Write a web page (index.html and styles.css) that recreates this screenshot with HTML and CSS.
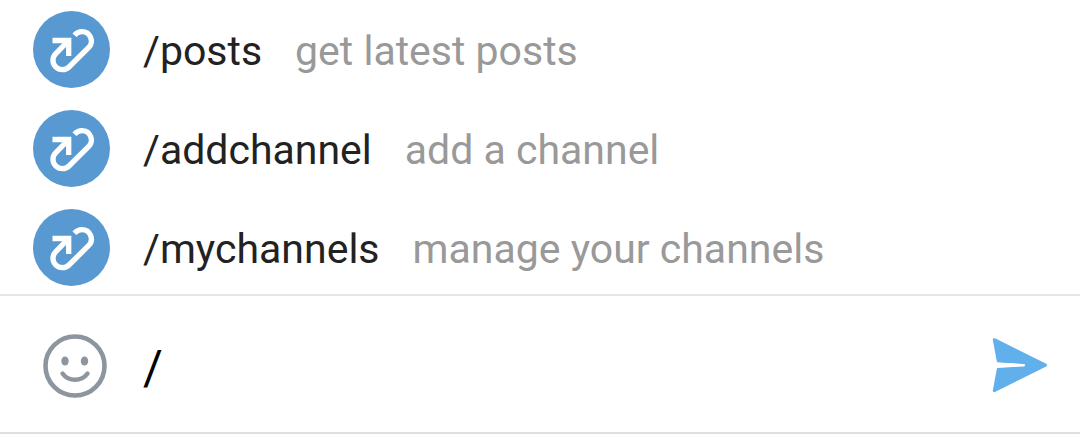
FILE: index.html
```html
<!DOCTYPE html>
<html lang="en">
<head>
<meta charset="utf-8">
<meta name="viewport" content="width=device-width, initial-scale=1">
<title>Bot commands</title>
<link rel="stylesheet" href="styles.css">
</head>
<body>
<svg class="sprite" aria-hidden="true">
  <symbol id="bot" viewBox="0 0 77 77">
    <circle cx="38.500" cy="38.500" r="38.500" fill="#5999d1"/>
    <path d="M19.500 29.500H35.700V45M35.700 29.500L22.800 42.600A9.400 9.400 0 0 0 36 56L55.500 36.700A9.400 9.400 0 0 0 48.800 20.600Q44.500 20.600 41.500 24.200" fill="none" stroke="#fff" stroke-width="5.300"/>
  </symbol>
</svg>
<ul class="commands">
  <li><button class="command" type="button"><svg class="avatar" aria-hidden="true"><use href="#bot"/></svg><span class="name">/posts</span><span class="hint">get latest posts</span></button></li>
  <li><button class="command" type="button"><svg class="avatar" aria-hidden="true"><use href="#bot"/></svg><span class="name">/addchannel</span><span class="hint">add a channel</span></button></li>
  <li><button class="command" type="button"><svg class="avatar" aria-hidden="true"><use href="#bot"/></svg><span class="name">/mychannels</span><span class="hint">manage your channels</span></button></li>
</ul>
<form class="composer">
  <button class="icon-button" type="button" aria-label="Emoji">
    <svg class="emoji" viewBox="0 0 64 64" aria-hidden="true"><circle cx="32" cy="32" r="29.500" fill="none" stroke="#8d969e" stroke-width="4.600"/><ellipse cx="22" cy="27" rx="3.700" ry="4.600" fill="#8d969e"/><ellipse cx="41.500" cy="27" rx="3.700" ry="4.600" fill="#8d969e"/><path d="M19.500 39.500Q24 45.800 32 45.800T44.500 39.500" fill="none" stroke="#8d969e" stroke-width="4.400" stroke-linecap="round"/></svg>
  </button>
  <input class="message" type="text" value="/" aria-label="Message">
  <button class="icon-button" type="submit" aria-label="Send">
    <svg class="send" viewBox="0 0 56 56" aria-hidden="true"><path d="M2.300 1.700L53.500 27.200L2.300 52.700L6.300 31.200L34 29.700V24.700L6.300 23.200Z" fill="#62b0eb" stroke="#62b0eb" stroke-width="3" stroke-linejoin="round"/><path d="M4 24.300L32.700 26.200V28L4 29.700Z" fill="#fff"/></svg>
  </button>
</form>
</body>
</html>
```
FILE: styles.css
```css
* { box-sizing: border-box; }
body { margin: 0; background: #fff; font-family: Roboto, sans-serif; }
.sprite { position: absolute; width: 0; height: 0; }
.commands { list-style: none; margin: 0; padding: 0; }
.command { display: flex; align-items: center; width: 100%; height: 99px; padding: 0 33px; border: 0; background: none; font: 41px/48px Roboto, sans-serif; text-align: left; }
.avatar { flex: none; width: 77px; height: 77px; margin-right: 33px; }
.name { color: #222; margin-right: 33px; padding-top: 3px; }
.hint { color: #999; padding-top: 3px; }
.composer { display: flex; align-items: center; height: 140px; margin-top: -3px; padding: 4px 32px 0 43px; border-top: 2px solid #e5e5e5; border-bottom: 2px solid #dfdfdf; }
.icon-button { display: flex; flex: none; padding: 0; border: 0; background: none; }
.emoji { width: 64px; height: 64px; }
.send { width: 56px; height: 56px; }
.message { flex: 1; min-width: 0; margin: 0 36px; padding: 4px 0 0; border: 0; outline: 0; background: none; color: #000; font: 48px/56px Roboto, sans-serif; }
```
